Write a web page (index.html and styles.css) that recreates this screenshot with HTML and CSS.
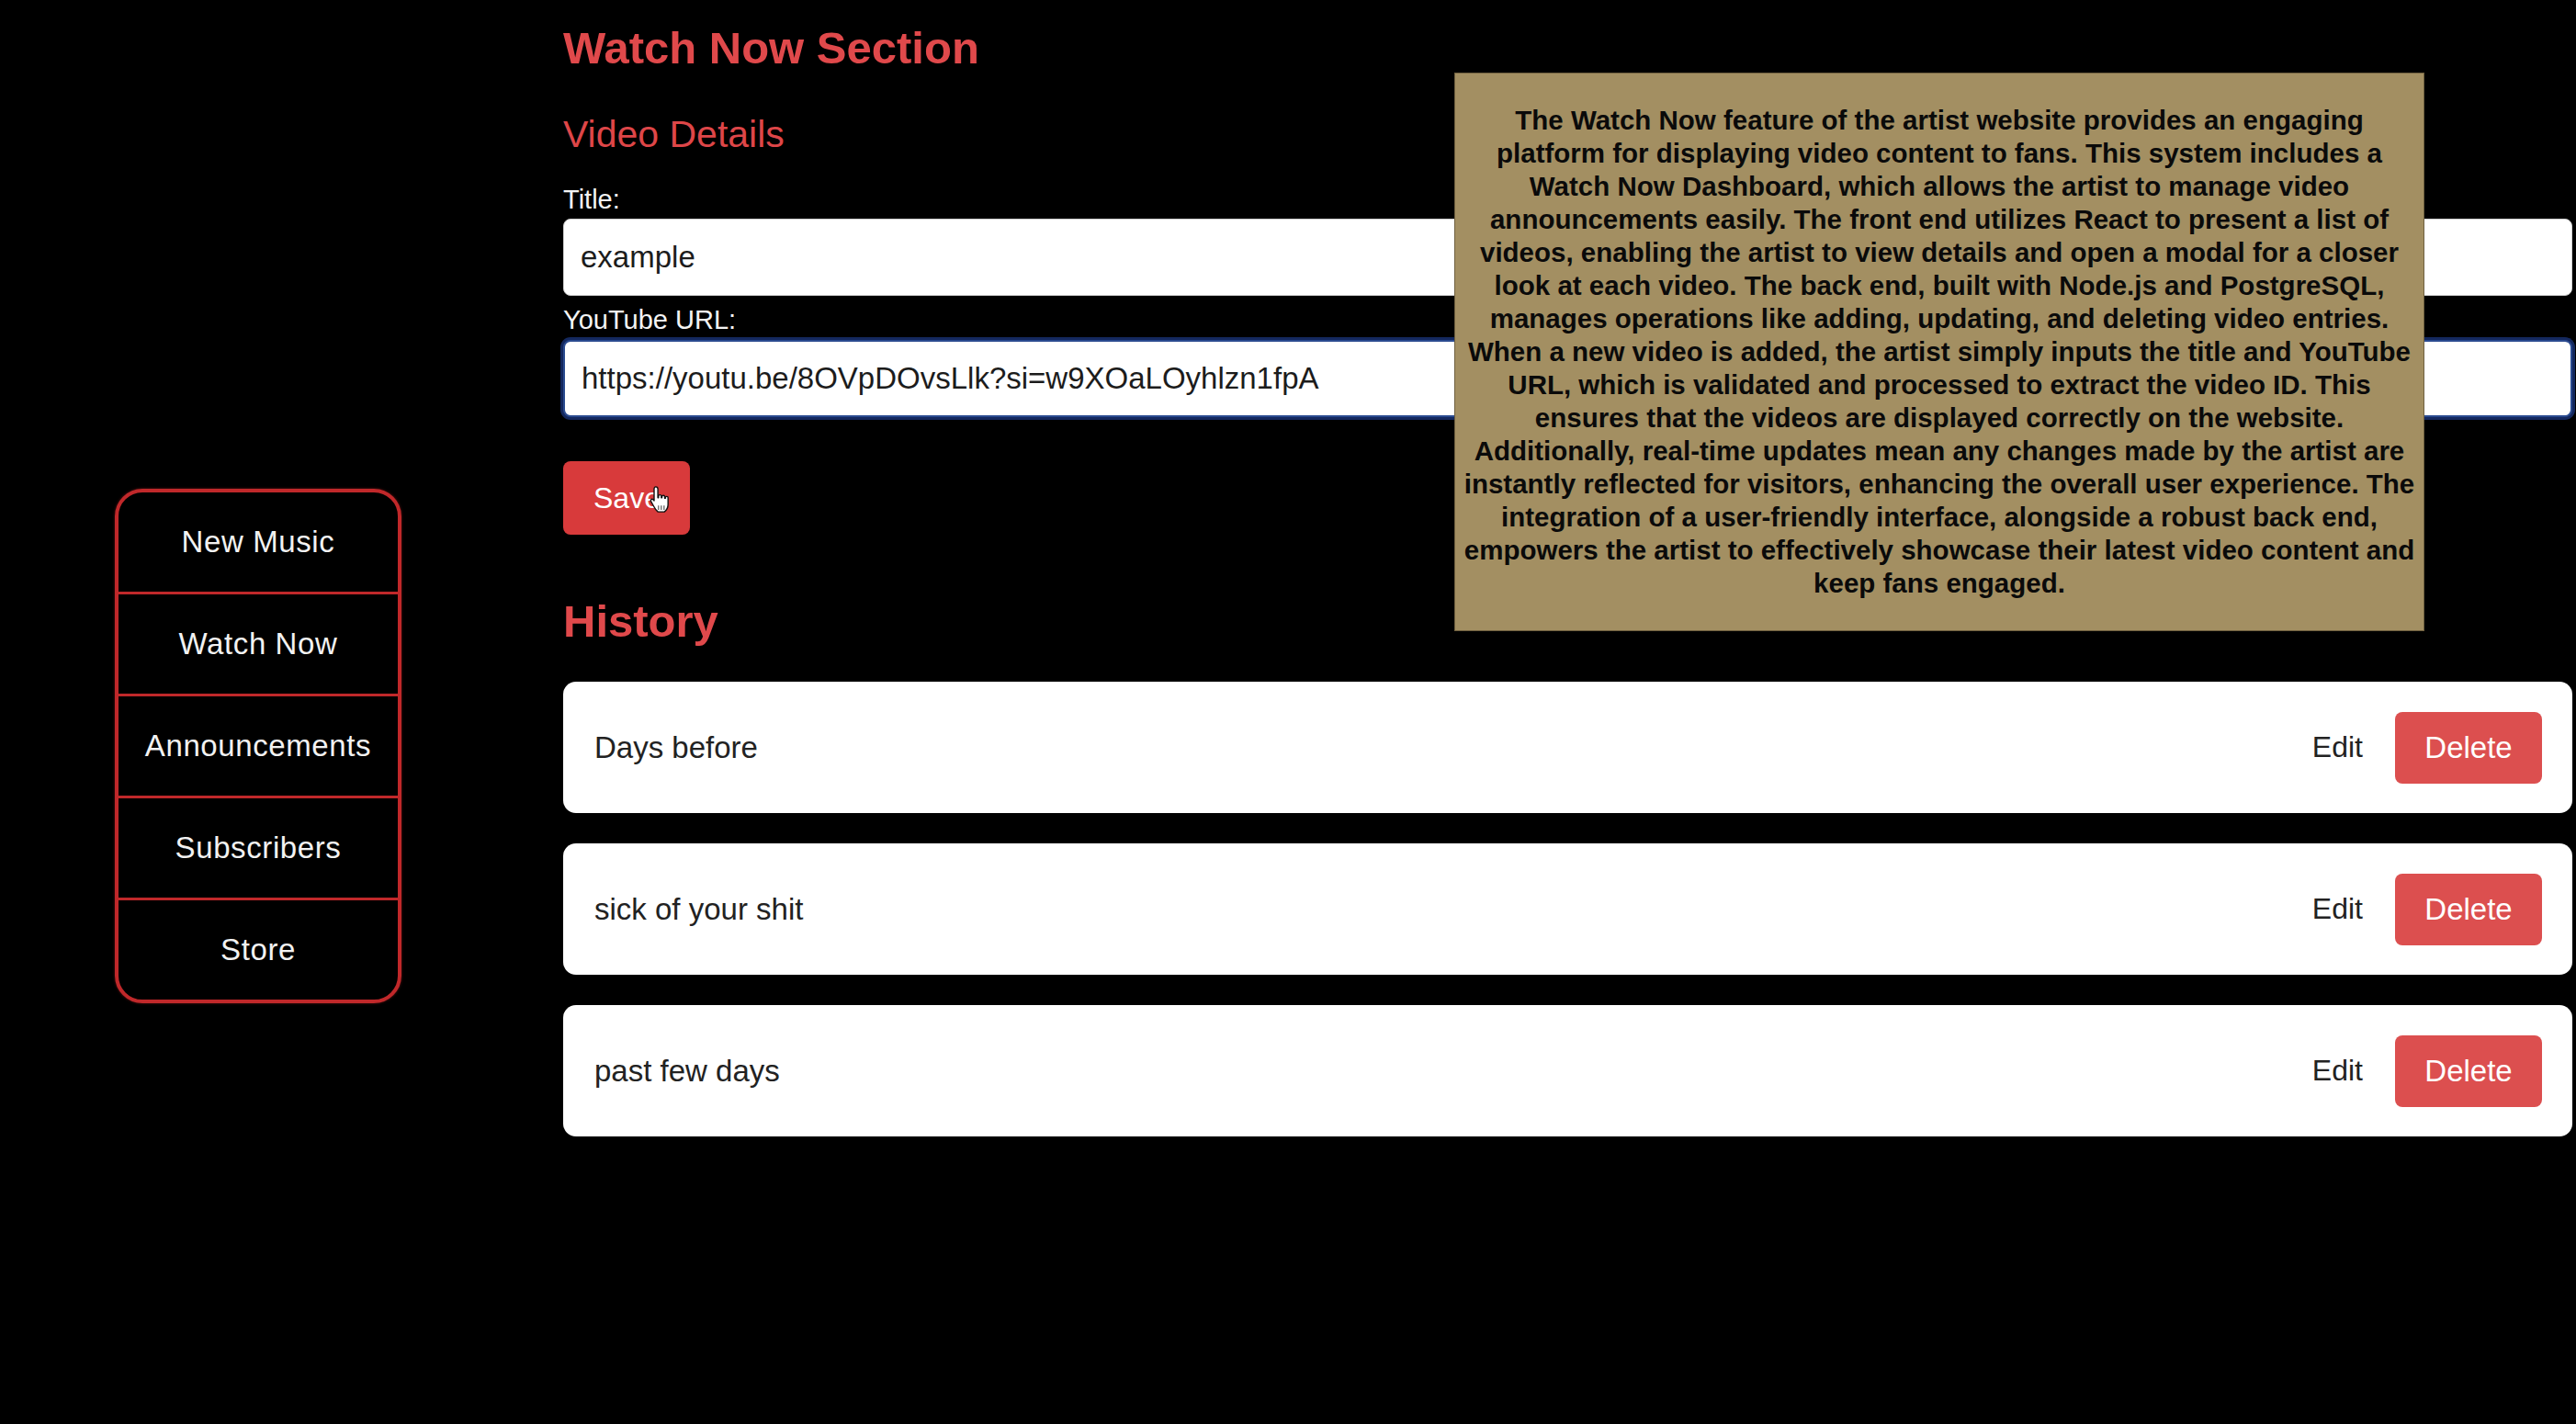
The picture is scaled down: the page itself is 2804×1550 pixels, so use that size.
FILE: index.html
```html
<!DOCTYPE html>
<html lang="en">
<head>
<meta charset="utf-8">
<title>Watch Now Section</title>
<link rel="stylesheet" href="styles.css">
</head>
<body>
<div class="page">
  <aside class="sidebar">
    <nav class="nav">
      <div class="nav-item">New Music</div>
      <div class="nav-item">Watch Now</div>
      <div class="nav-item">Announcements</div>
      <div class="nav-item">Subscribers</div>
      <div class="nav-item">Store</div>
    </nav>
  </aside>
  <main class="main">
    <h1 class="title">Watch Now Section</h1>
    <h2 class="subtitle">Video Details</h2>
    <label class="label label-first">Title:</label>
    <input class="field" type="text" value="example">
    <label class="label label-second">YouTube URL:</label>
    <input class="field field-focus" type="text" value="https://youtu.be/8OVpDOvsLlk?si=w9XOaLOyhlzn1fpA">
    <div class="save-wrap">
      <button class="save">Save</button>
      <svg class="cursor" viewBox="0 0 24 28" width="28" height="33" aria-hidden="true">
        <path d="M7.5 1.5c1.1 0 2 .9 2 2v8.2h.6V10c0-1.4 2.6-1.4 2.6 0v1.7h.6v-1.1c0-1.4 2.6-1.4 2.6 0v1.6h.6v-.7c0-1.4 2.5-1.4 2.5 0v6.3c0 3.2-1.6 5.6-3.4 7H9.6c-1.6-1.2-3-3.2-4-5.200l-2.6-4.7c-.7-1.3.9-2.6 2.1-1.5l.9 1V3.5c0-1.1.6-2 1.5-2z" fill="#fff" stroke="#111" stroke-width="1.2" stroke-linejoin="round"/>
        <path d="M12.7 19v4M15.3 19v4M10.1 19v4" stroke="#555" stroke-width="1"/>
      </svg>
    </div>
    <h1 class="title history-title">History</h1>
    <div class="history">
      <div class="row">
        <span class="row-title">Days before</span>
        <div class="actions"><span class="edit">Edit</span><button class="delete">Delete</button></div>
      </div>
      <div class="row">
        <span class="row-title">sick of your shit</span>
        <div class="actions"><span class="edit">Edit</span><button class="delete">Delete</button></div>
      </div>
      <div class="row">
        <span class="row-title">past few days</span>
        <div class="actions"><span class="edit">Edit</span><button class="delete">Delete</button></div>
      </div>
    </div>
  </main>
  <div class="overlay">
    <p class="overlay-text">The Watch Now feature of the artist website provides an engaging<br>platform for displaying video content to fans. This system includes a<br>Watch Now Dashboard, which allows the artist to manage video<br>announcements easily. The front end utilizes React to present a list of<br>videos, enabling the artist to view details and open a modal for a closer<br>look at each video. The back end, built with Node.js and PostgreSQL,<br>manages operations like adding, updating, and deleting video entries.<br>When a new video is added, the artist simply inputs the title and YouTube<br>URL, which is validated and processed to extract the video ID. This<br>ensures that the videos are displayed correctly on the website.<br>Additionally, real-time updates mean any changes made by the artist are<br>instantly reflected for visitors, enhancing the overall user experience. The<br>integration of a user-friendly interface, alongside a robust back end,<br>empowers the artist to effectively showcase their latest video content and<br>keep fans engaged.</p>
  </div>
</div>
</body>
</html>
```
FILE: styles.css
```css
* { box-sizing: border-box; }

html, body {
  margin: 0;
  padding: 0;
  background: #000;
}

body {
  width: 2804px;
  height: 1550px;
  overflow: hidden;
  font-family: "Liberation Sans", Arial, sans-serif;
  color: #fff;
}

.page {
  position: relative;
  display: flex;
  align-items: flex-start;
  height: 1550px;
}

.sidebar {
  width: 437px;
  padding-left: 125px;
  padding-top: 532px;
  flex: none;
}

.nav {
  width: 312px;
  border: 4px solid #c0282a;
  border-radius: 30px;
  overflow: hidden;
  display: flex;
  flex-direction: column;
  box-shadow: 0 0 3px rgba(200, 40, 40, 0.5);
}

.nav-item {
  height: 111px;
  display: flex;
  align-items: center;
  justify-content: center;
  font-size: 33px;
  letter-spacing: 0.6px;
  color: #f2f2f2;
  border-bottom: 3px solid #c0282a;
}

.nav-item:last-child {
  height: 108px;
  border-bottom: none;
}

.main {
  margin-left: 176px;
  width: 2187px;
  padding-top: 24px;
  display: flex;
  flex-direction: column;
  align-items: stretch;
}

.title {
  margin: 0;
  font-size: 49px;
  line-height: 56px;
  font-weight: 700;
  color: #e0494b;
}

.subtitle {
  margin: 42px 0 0;
  font-size: 41px;
  line-height: 48px;
  font-weight: 400;
  color: #de4648;
}

.label {
  display: block;
  font-size: 29px;
  line-height: 34px;
  color: #f4f4f4;
}

.label-first { margin-top: 30px; }
.label-second { margin-top: 9px; }

.field {
  display: block;
  width: 100%;
  height: 84px;
  margin-top: 4px;
  padding: 0 18px;
  border: 1px solid #cfcfcf;
  border-radius: 8px;
  background: #fff;
  font-family: "Liberation Sans", Arial, sans-serif;
  font-size: 33px;
  color: #1c1c1c;
  outline: none;
}

.field-focus {
  margin-top: 5px;
  border: 2px solid #2a4a8f;
  box-shadow: 0 0 0 3px #14285e;
}

.save-wrap {
  position: relative;
  margin-top: 48px;
  align-self: flex-start;
}

.save {
  display: block;
  width: 138px;
  height: 80px;
  border: none;
  border-radius: 8px;
  background: #d83a3b;
  color: #fff;
  font-family: "Liberation Sans", Arial, sans-serif;
  font-size: 32px;
  text-align: left;
  padding: 0 0 0 33px;
}

.cursor {
  position: absolute;
  left: 92px;
  top: 26px;
}

.history-title {
  margin-top: 66px;
}

.history {
  margin-top: 38px;
  display: flex;
  flex-direction: column;
  gap: 33px;
}

.row {
  height: 143px;
  background: #fff;
  border-radius: 14px;
  display: flex;
  align-items: center;
  justify-content: space-between;
  padding: 0 33px 0 34px;
}

.row-title {
  font-size: 33px;
  color: #222;
}

.actions {
  display: flex;
  align-items: center;
  gap: 35px;
}

.edit {
  font-size: 32px;
  color: #222;
}

.delete {
  width: 160px;
  height: 78px;
  border: none;
  border-radius: 8px;
  background: #dc4f4f;
  color: #fff;
  font-family: "Liberation Sans", Arial, sans-serif;
  font-size: 33px;
}

.overlay {
  position: absolute;
  left: 1583px;
  top: 79px;
  width: 1056px;
  height: 608px;
  background: #a38f62;
  border: 1px solid #6f603f;
  display: flex;
  align-items: flex-start;
  justify-content: center;
  padding-top: 33px;
}

.overlay-text {
  margin: 0;
  font-size: 29.5px;
  line-height: 36px;
  font-weight: 700;
  color: #0a0a0a;
  text-align: center;
  white-space: nowrap;
}
```
